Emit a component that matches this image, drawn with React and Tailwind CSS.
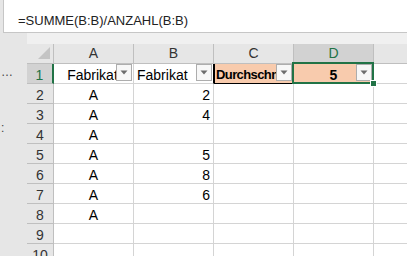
import React from "react";

const FilterBtn = () => (
  <div className="absolute right-[1px] top-0 z-10 w-[16px] h-[17px] bg-[#f7f7f7] border border-[#adadad] flex items-center justify-center">
    <svg width="8" height="5" viewBox="0 0 8 5">
      <path d="M0.5 0.5 L7.5 0.5 L4 4.5 Z" fill="#6d6d6d" />
    </svg>
  </div>
);

const bVals = ["2", "4", "", "5", "8", "6", ""];

export default function App() {
  const rows = [];
  for (let r = 2; r <= 10; r++) {
    const a = r <= 8 ? "A" : "";
    const b = r <= 8 ? bVals[r - 2] : "";
    rows.push(
      <React.Fragment key={r}>
        <div className="h-[20px] bg-[#e6e6e6] border-r border-b border-[#bfbfbf] flex items-end justify-center leading-[16px] text-[14px] text-[#333]">
          {r}
        </div>
        <div className="h-[20px] bg-white border-r border-b border-[#d4d4d4] flex items-end justify-center leading-[16px] text-[14px] text-black">
          {a}
        </div>
        <div className="h-[20px] bg-white border-r border-b border-[#d4d4d4] flex items-end justify-end pr-[3px] leading-[16px] text-[14px] text-black">
          {b}
        </div>
        <div className="h-[20px] bg-white border-r border-b border-[#d4d4d4]" />
        <div className="h-[20px] bg-white border-r border-b border-[#d4d4d4]" />
        <div className="h-[20px] bg-white border-b border-[#d4d4d4]" />
      </React.Fragment>
    );
  }

  return (
    <div className="w-[407px] h-[256px] overflow-hidden bg-[#e6e6e6] flex flex-col font-['Liberation_Sans',Arial,sans-serif]">
      {/* formula bar */}
      <div className="h-[33px] pl-[3px] flex shrink-0 bg-[#e6e6e6]">
        <div className="flex-1 bg-white border-l border-b border-[#c6c6c6] pl-[14px] pt-[13px] text-[13px] leading-[16px] text-[#222]">
          =SUMME(B:B)/ANZAHL(B:B)
        </div>
      </div>
      <div className="flex flex-1 min-h-0">
        {/* left strip */}
        <div className="w-[27px] shrink-0 bg-[#e6e6e6] flex flex-col text-[#444] text-[12px] leading-[12px] pl-[1px]">
          <div className="pt-[33px]">…</div>
          <div className="pt-[44px]">:</div>
        </div>
        {/* sheet */}
        <div className="flex-1 flex flex-col bg-[#f0f0f0] min-w-0">
          <div className="h-[11px] shrink-0" />
          <div className="grid grid-cols-[27px_80px_80px_80px_80px_40px] auto-rows-[20px]">
            {/* header row */}
            <div className="h-[20px] bg-[#e6e6e6] border-r border-b border-[#bfbfbf] flex items-end justify-end pr-[3px] pb-[4px]">
              <svg width="12" height="12" viewBox="0 0 12 12">
                <path d="M12 0 L12 12 L0 12 Z" fill="#c4c4c4" />
              </svg>
            </div>
            <div className="h-[20px] bg-[#e6e6e6] border-r border-b border-[#bfbfbf] flex items-center justify-center text-[14px] text-[#333]">A</div>
            <div className="h-[20px] bg-[#e6e6e6] border-r border-b border-[#bfbfbf] flex items-center justify-center text-[14px] text-[#333]">B</div>
            <div className="h-[20px] bg-[#e6e6e6] border-r border-b border-[#bfbfbf] flex items-center justify-center text-[14px] text-[#333]">C</div>
            <div className="h-[20px] bg-[#d2d2d2] border-r border-[#bfbfbf] border-b-2 border-b-[#217346] flex items-center justify-center text-[14px] text-[#217346]">D</div>
            <div className="h-[20px] bg-[#e6e6e6] border-b border-[#bfbfbf]" />

            {/* row 1 */}
            <div className="h-[20px] bg-[#d2d2d2] border-b border-[#bfbfbf] border-r-2 border-r-[#217346] flex items-end justify-center leading-[16px] text-[14px] text-[#217346]">1</div>
            <div className="relative h-[20px] bg-white border-r border-b border-[#d4d4d4] flex items-end justify-center leading-[16px] text-[14px] text-black overflow-hidden whitespace-nowrap">
              <span className="pr-[2px]">Fabrikat</span>
              <FilterBtn />
            </div>
            <div className="relative h-[20px] bg-white border-b border-[#d4d4d4] border-r border-r-black flex items-end pl-[3px] leading-[16px] text-[14px] text-black overflow-hidden whitespace-nowrap">
              Fabrikat
              <FilterBtn />
            </div>
            <div className="relative h-[20px] bg-[#f8cbad] border-r border-[#d4d4d4] border-b border-b-black shadow-[inset_1px_0_0_#000] flex items-end pl-[2px] leading-[16px] text-[13px] tracking-[-0.6px] font-bold text-black overflow-hidden whitespace-nowrap">
              Durchschnitt
              <FilterBtn />
            </div>
            <div className="relative h-[20px] bg-[#f8cbad] border-r border-b border-[#d4d4d4] flex items-end justify-center leading-[16px] text-[14px] font-bold text-black">
              5
              <FilterBtn />
              <div className="absolute left-[-2px] top-[-2px] right-[-1px] bottom-[-1px] border-2 border-[#217346] z-20 pointer-events-none" />
              <div className="absolute right-[-4px] bottom-[-4px] w-[7px] h-[7px] bg-[#217346] border border-white z-30" />
            </div>
            <div className="h-[20px] bg-white border-b border-[#d4d4d4]" />

            {rows}
          </div>
        </div>
      </div>
    </div>
  );
}
